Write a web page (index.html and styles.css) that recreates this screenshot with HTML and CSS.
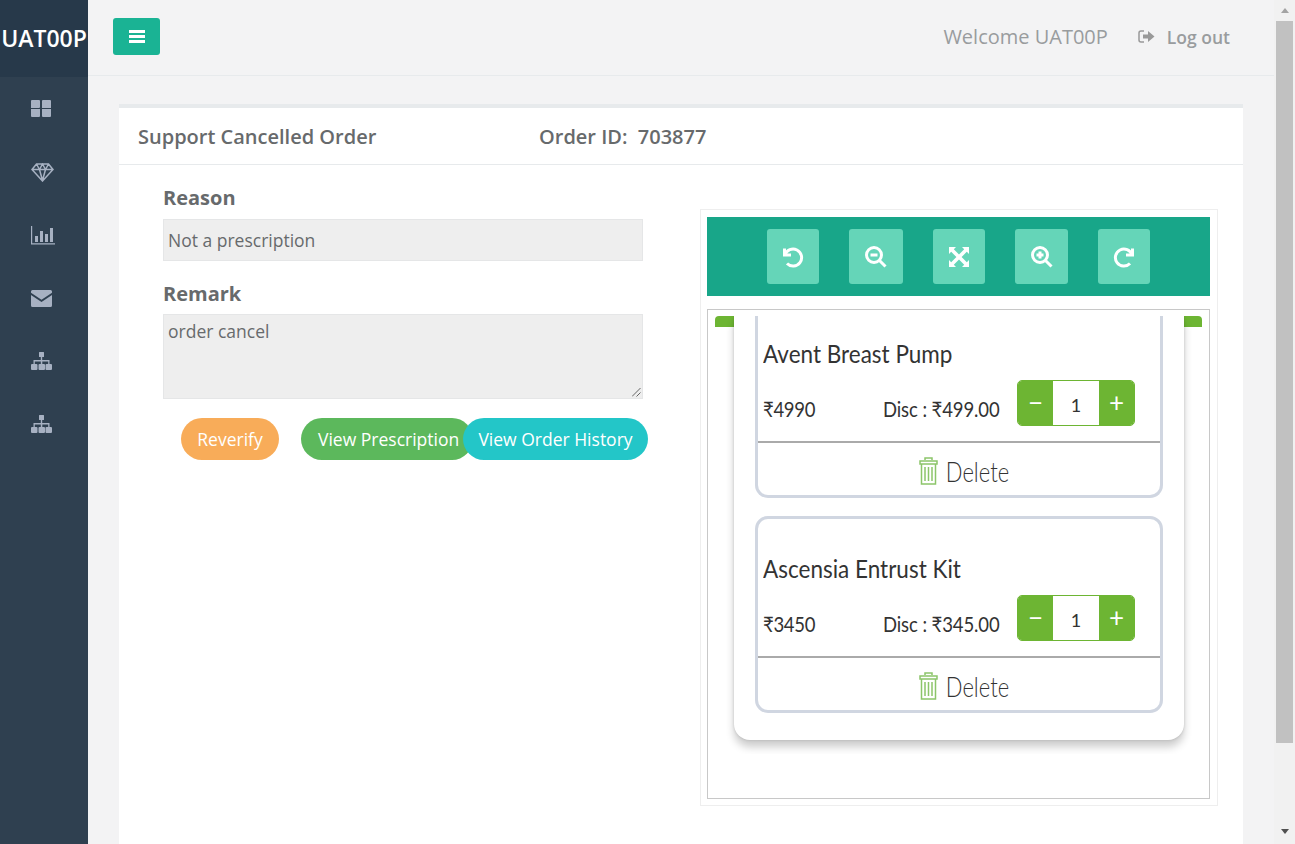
FILE: index.html
```html
<!DOCTYPE html>
<html lang="en">
<head>
	<meta charset="UTF-8">
	<meta name="viewport" content="width=device-width, initial-scale=1.0">
	<title>Support Cancelled Order</title>
	<link rel="stylesheet" href="styles.css">
</head>
<body>
	<div class="app">
		<aside class="sidebar">
			<div class="brand">UAT00P</div>
			<nav class="nav">
				<a class="nav-item"><svg width="20" height="17" viewBox="0 0 20 17"><path d="M1 0h7a1 1 0 0 1 1 1v6a1 1 0 0 1-1 1H0V1a1 1 0 0 1 1-1zM11 1a1 1 0 0 1 1-1h7a1 1 0 0 1 1 1v7h-9zM0 9h9v7a1 1 0 0 1-1 1H1a1 1 0 0 1-1-1zM11 9h9v7a1 1 0 0 1-1 1h-7a1 1 0 0 1-1-1z"/></svg></a>
				<a class="nav-item"><svg width="23" height="19" viewBox="0 0 23 19"><path class="line" d="M5.500 1h12l4.500 5.500L11.500 18 1 6.500zM1 6.500h21M8.500 6.500l3 11 3-11M5.500 1l3 5.500L11.500 1l3 5.500 3-5.500" stroke-width="1.500"/></svg></a>
				<a class="nav-item"><svg width="24" height="19" viewBox="0 0 24 19"><path d="M0 0h1.200v17.300H24v1.200H0z"/><path d="M4 10h3v6H4zM9 5h3v11H9zM14 8h3v8h-3zM19 2h3v14h-3z"/></svg></a>
				<a class="nav-item"><svg width="21" height="17" viewBox="0 0 21 17"><path d="M1.500 0h18A1.500 1.500 0 0 1 21 1.500v1.200l-10.500 7-10.500-7V1.500A1.500 1.500 0 0 1 1.500 0zM0 5l10.500 7L21 5v10.500a1.500 1.500 0 0 1-1.500 1.500h-18A1.500 1.500 0 0 1 0 15.500z"/></svg></a>
				<a class="nav-item"><svg width="21" height="18" viewBox="0 0 21 18"><path d="M8.500 0h4a.5.500 0 0 1 .5.500v4a.5.500 0 0 1-.5.500h-1.300v3h7.300v4H20a1 1 0 0 1 1 1v4a1 1 0 0 1-1 1h-4.500a1 1 0 0 1-1-1v-4a1 1 0 0 1 1-1h1.700V9.500h-5.900V12h1.700a1 1 0 0 1 1 1v4a1 1 0 0 1-1 1H8.500a1 1 0 0 1-1-1v-4a1 1 0 0 1 1-1h1.300V9.500H3.800V12h1.700a1 1 0 0 1 1 1v4a1 1 0 0 1-1 1H1a1 1 0 0 1-1-1v-4a1 1 0 0 1 1-1h1.500V8h7.300V5H8.500a.5.500 0 0 1-.5-.5v-4a.5.500 0 0 1 .5-.5z"/></svg></a>
				<a class="nav-item"><svg width="21" height="18" viewBox="0 0 21 18"><path d="M8.500 0h4a.5.500 0 0 1 .5.500v4a.5.500 0 0 1-.5.500h-1.300v3h7.300v4H20a1 1 0 0 1 1 1v4a1 1 0 0 1-1 1h-4.500a1 1 0 0 1-1-1v-4a1 1 0 0 1 1-1h1.700V9.500h-5.900V12h1.700a1 1 0 0 1 1 1v4a1 1 0 0 1-1 1H8.500a1 1 0 0 1-1-1v-4a1 1 0 0 1 1-1h1.300V9.500H3.800V12h1.700a1 1 0 0 1 1 1v4a1 1 0 0 1-1 1H1a1 1 0 0 1-1-1v-4a1 1 0 0 1 1-1h1.500V8h7.300V5H8.500a.5.500 0 0 1-.5-.5v-4a.5.500 0 0 1 .5-.5z"/></svg></a>
			</nav>
		</aside>

		<main class="main">
			<header class="topbar">
				<button class="menu-btn"><svg width="16" height="13" viewBox="0 0 16 13"><path d="M0 0h16v3H0zM0 5h16v3H0zM0 10h16v3H0z"/></svg></button>
				<span class="welcome">Welcome UAT00P</span>
				<a class="logout"><svg width="17" height="13" viewBox="0 0 17 13"><path d="M6 1H3a2 2 0 0 0-2 2v7a2 2 0 0 0 2 2h3" fill="none" stroke="#999" stroke-width="1.500"/><path d="M5 4.500h5V1l6.500 5.500L10 12V8.500H5z"/></svg>Log out</a>
			</header>

			<section class="content">
				<div class="card">
					<div class="card-head">
						<div class="card-title">Support Cancelled Order</div>
						<div class="order-id">Order ID:&nbsp; 703877</div>
					</div>
					<div class="card-body">
						<div class="form-col">
							<label class="field-label">Reason</label>
							<div class="field field-input">Not a prescription</div>
							<label class="field-label field-label-2">Remark</label>
							<div class="field field-area">order cancel
								<svg class="grip" width="9" height="9" viewBox="0 0 9 9"><path d="M0 8.500L8.500 0M4.500 8.500L8.500 4.500" stroke="#666" stroke-width="1" fill="none"/></svg>
							</div>
							<div class="actions">
								<button class="pill pill-orange">Reverify</button>
								<button class="pill pill-green">View Prescription</button>
								<button class="pill pill-teal">View Order History</button>
							</div>
						</div>

						<div class="viewer">
							<div class="toolbar">
								<button class="tool tool-52"><svg width="24" height="24" viewBox="0 0 24 24"><path d="M3.500 3.500v6.500H10" class="w"/><path d="M4 10A8.500 8.500 0 1 1 6 18.500" class="w"/></svg></button>
								<button class="tool tool-54"><svg width="24" height="24" viewBox="0 0 24 24"><circle cx="10" cy="10" r="7.500" class="w"/><path d="M15.500 15.500l6 6M6.500 10h7" class="w"/></svg></button>
								<button class="tool tool-52"><svg width="22" height="22" viewBox="0 0 22 22"><path d="M1 1h7L5.800 3.200 11 8.400l5.200-5.200L14 1h7v7l-2.200-2.200L13.600 11l5.200 5.200L21 14v7h-7l2.200-2.200L11 13.600l-5.200 5.200L8 21H1v-7l2.200 2.200L8.400 11 3.200 5.800 1 8z" fill="#fff"/></svg></button>
								<button class="tool tool-53"><svg width="24" height="24" viewBox="0 0 24 24"><circle cx="10" cy="10" r="7.500" class="w"/><path d="M15.500 15.500l6 6M6.500 10h7M10 6.500v7" class="w"/></svg></button>
								<button class="tool tool-52"><svg width="24" height="24" viewBox="0 0 24 24"><path d="M20.500 3.500v6.500H14" class="w"/><path d="M20 10A8.500 8.500 0 1 0 18 18.500" class="w"/></svg></button>
							</div>
							<div class="frame">
								<div class="sheet-wrap">
									<div class="sheet">
										<div class="item item-cut">
											<div class="item-name">Avent Breast Pump</div>
											<div class="item-row">
												<span class="price">₹4990</span>
												<span class="disc">Disc : ₹499.00</span>
												<span class="stepper"><b>−</b><i>1</i><b>+</b></span>
											</div>
											<div class="item-del">
												<svg width="19" height="28" viewBox="0 0 19 28"><path d="M6 3V1h7v2M1 4h17v3H1zM2.500 7h14v20h-14zM6 10v14M9.500 10v14M13 10v14" fill="none" stroke="#8cc56a" stroke-width="1.500"/></svg>
												<span class="del-text">Delete</span>
											</div>
										</div>
										<div class="item">
											<div class="item-name">Ascensia Entrust Kit</div>
											<div class="item-row">
												<span class="price">₹3450</span>
												<span class="disc">Disc : ₹345.00</span>
												<span class="stepper"><b>−</b><i>1</i><b>+</b></span>
											</div>
											<div class="item-del">
												<svg width="19" height="28" viewBox="0 0 19 28"><path d="M6 3V1h7v2M1 4h17v3H1zM2.500 7h14v20h-14zM6 10v14M9.500 10v14M13 10v14" fill="none" stroke="#8cc56a" stroke-width="1.500"/></svg>
												<span class="del-text">Delete</span>
											</div>
										</div>
									</div>
								</div>
							</div>
						</div>
					</div>
				</div>
			</section>
		</main>

		<div class="scrollbar">
			<span class="arrow-up"></span>
			<span class="thumb"></span>
			<span class="arrow-down"></span>
		</div>
	</div>
</body>
</html>
```

FILE: styles.css
```css
* {
	box-sizing: border-box;
}

html, body {
	margin: 0;
	height: 100%;
	overflow: hidden;
}

body {
	font-family: "Open Sans", Arial, sans-serif;
	color: #676a6c;
	background-color: #f3f3f4;
}

button {
	font-family: inherit;
	border: none;
	padding: 0;
}

.app {
	display: flex;
	height: 844px;
}

/* Sidebar */
.sidebar {
	width: 88px;
	flex: none;
	background-color: #2f4050;
}

.brand {
	height: 77px;
	background-color: #27394a;
	color: #fff;
	font-size: 23px;
	font-weight: 600;
	line-height: 77px;
	text-align: center;
	white-space: nowrap;
}

.nav-item {
	display: flex;
	align-items: center;
	height: 63px;
	padding-left: 31px;
}

.nav-item:first-child {
	margin-bottom: 1px;
}

.nav-item:nth-child(n+5) svg {
	margin-bottom: 2px;
}

.nav-item svg {
	fill: #a7b1c2;
}

.nav-item .line {
	fill: none;
	stroke: #a7b1c2;
}

/* Top bar */
.main {
	flex: 1;
	min-width: 0;
}

.topbar {
	display: flex;
	align-items: center;
	height: 76px;
	padding: 0 44px 2px 25px;
	border-bottom: 1px solid #e7eaec;
}

.menu-btn {
	display: flex;
	align-items: center;
	justify-content: center;
	width: 47px;
	height: 37px;
	margin-bottom: 1px;
	background-color: #1ab394;
	border-radius: 3px;
}

.menu-btn svg {
	fill: #fff;
}

.welcome {
	margin-left: auto;
	font-size: 20px;
	color: #999c9e;
}

.logout {
	display: flex;
	align-items: center;
	gap: 12px;
	margin-left: 30px;
	font-size: 17.5px;
	font-weight: 600;
	color: #999c9e;
}

.logout svg {
	fill: #999;
}

/* Card */
.content {
	padding: 28px 31px 0;
}

.card {
	height: 760px;
	background-color: #fff;
	border-top: 4px solid #e7eaec;
}

.card-head {
	display: flex;
	align-items: center;
	height: 57px;
	padding: 1px 0 0 19px;
	border-bottom: 1px solid #e7eaec;
	font-size: 20px;
	font-weight: 600;
}

.card-title {
	width: 401px;
}

.card-body {
	display: flex;
}

/* Left form */
.form-col {
	width: 581px;
	flex: none;
	padding: 20px 0 0 44px;
}

.field-label {
	display: block;
	font-size: 20px;
	font-weight: 700;
	line-height: 26px;
}

.field-label-2 {
	margin-top: 20px;
}

.field {
	position: relative;
	width: 480px;
	background-color: #eee;
	border: 1px solid #e5e6e7;
	padding: 0 4px;
	font-size: 17.5px;
	color: #676a6c;
}

.field-input {
	height: 42px;
	margin-top: 8px;
	line-height: 40px;
}

.field-area {
	height: 85px;
	margin-top: 7px;
	line-height: 32px;
}

.grip {
	position: absolute;
	right: 1px;
	bottom: 1px;
}

.actions {
	display: flex;
	margin-top: 19px;
	padding-left: 18px;
}

.pill {
	height: 42px;
	border-radius: 21px;
	color: #fff;
	font-size: 17.5px;
	white-space: nowrap;
}

.pill-orange {
	width: 98px;
	background-color: #f8ac59;
}

.pill-green {
	width: 172px;
	margin-left: 22px;
	padding-left: 17px;
	text-align: left;
	background-color: #5cb85c;
}

.pill-teal {
	position: relative;
	width: 185px;
	margin-left: -10px;
	background-color: #23c6c8;
}

/* Image viewer */
.viewer {
	width: 518px;
	height: 597px;
	margin-top: 44px;
	padding: 7px 7px 6px 6px;
	border: 1px solid #eee;
}

.toolbar {
	display: flex;
	gap: 30px;
	height: 79px;
	padding: 12px 0 0 60px;
	background-color: #18a689;
}

.tool {
	display: flex;
	align-items: center;
	justify-content: center;
	height: 55px;
	background-color: #65d5b8;
	border-radius: 3px;
}

.tool-52 { width: 52px; }
.tool-53 { width: 53px; }
.tool-54 { width: 54px; }

.w {
	fill: none;
	stroke: #fff;
	stroke-width: 3;
}

.frame {
	height: 490px;
	margin-top: 13px;
	padding: 6px 7px 0;
	border: 1px solid #c8c8c8;
}

.sheet-wrap {
	position: relative;
	padding: 0 18px 0 19px;
}

/* green bar that shows past the sheet on both sides */
.sheet-wrap::before {
	content: "";
	position: absolute;
	top: 0;
	left: 0;
	right: 0;
	height: 11px;
	background-color: #6db533;
	border-radius: 4px 4px 0 0;
}

.sheet {
	position: relative;
	height: 424px;
	padding: 0 21px;
	background-color: #fff;
	border-radius: 0 0 16px 16px;
	box-shadow: 0 7px 8px rgba(0, 0, 0, 0.2), 0 0 3px rgba(0, 0, 0, 0.15);
	clip-path: inset(0 -8px -14px -8px);
}

.item {
	height: 197px;
	margin-top: 18px;
	padding: 33px 0 0 5px;
	border: 3px solid #d0d6e1;
	border-radius: 13px;
	font-family: Lato, "Noto Sans", sans-serif;
	color: #333;
}

.item-cut {
	height: 182px;
	margin-top: 0;
	padding-top: 21px;
	border-top: none;
	border-radius: 0 0 13px 13px;
}

/* the product list in the reference is a stretched picture, so the text runs tall */
.item-name {
	font-size: 22.5px;
	line-height: 34px;
	transform: scaleY(1.15);
	transform-origin: left center;
}

.item-row {
	display: flex;
	align-items: flex-start;
	height: 61px;
	margin-top: 9px;
	font-size: 18.5px;
}

.price {
	width: 120px;
	padding-top: 17px;
	letter-spacing: -0.3px;
	transform: scaleY(1.15);
}

.disc {
	width: 134px;
	padding-top: 17px;
	white-space: nowrap;
	letter-spacing: -0.1px;
	transform: scaleY(1.15);
}

.stepper {
	display: flex;
	width: 118px;
	height: 46px;
	background-color: #fff;
	border: 1px solid #6db533;
	border-radius: 5px;
	overflow: hidden;
}

.stepper b {
	width: 35px;
	background-color: #6db533;
	color: #fff;
	font-size: 26px;
	font-weight: 400;
	line-height: 42px;
	text-align: center;
}

.stepper i {
	flex: 1;
	font-size: 18px;
	font-style: normal;
	line-height: 48px;
	text-align: center;
}

.item-del {
	display: flex;
	align-items: center;
	justify-content: center;
	gap: 8px;
	height: 53px;
	margin: 0 0 0 -5px;
	padding: 5px 0 0 10px;
	border-top: 2px solid #aaa;
	font-size: 22px;
	font-weight: 300;
	color: #333;
}

.del-text {
	transform: scaleY(1.25);
}

/* Scrollbar */
.scrollbar {
	display: flex;
	flex-direction: column;
	align-items: center;
	width: 21px;
	flex: none;
	background-color: #f1f1f1;
}

.arrow-up,
.arrow-down {
	width: 0;
	height: 0;
	border-left: 4px solid transparent;
	border-right: 4px solid transparent;
}

.arrow-up {
	margin: 8px 0 8px;
	border-bottom: 5px solid #a3a3a3;
}

.thumb {
	width: 17px;
	height: 722px;
	background-color: #c1c1c1;
}

.arrow-down {
	margin-top: 86px;
	border-top: 5px solid #505050;
}
```
